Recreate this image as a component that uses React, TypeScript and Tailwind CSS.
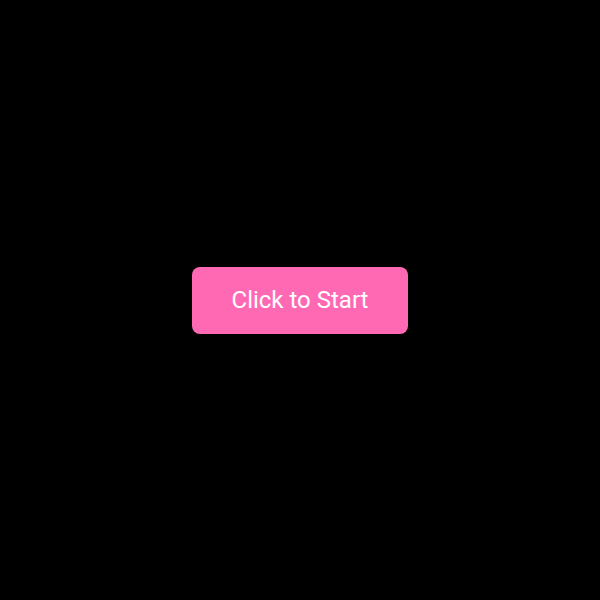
import React from 'react';

export default function App() {
  return (
    <div className="w-[600px] h-[600px] bg-black flex items-center justify-center">
      <button
        className="w-[216px] h-[67px] bg-[#ff69b4] text-white rounded-lg text-[24px] flex items-center justify-center"
        style={{ fontFamily: 'Roboto, "Noto Sans", sans-serif' }}
      >
        Click to Start
      </button>
    </div>
  );
}
